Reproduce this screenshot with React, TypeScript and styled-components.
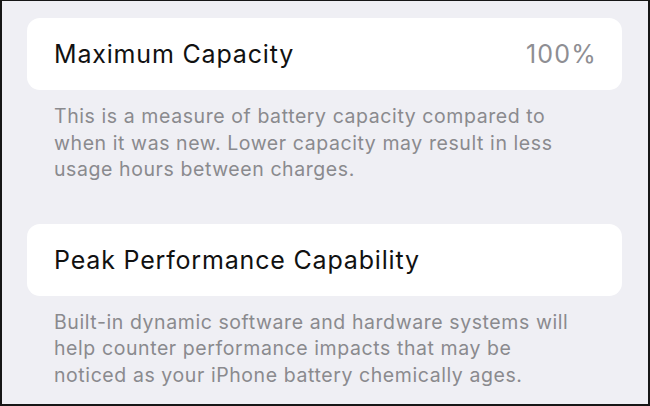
import React from "react";
import styled, { createGlobalStyle } from "styled-components";

const GlobalStyle = createGlobalStyle`
  html, body {
    margin: 0;
    padding: 0;
    background: #efeff4;
  }
  * {
    box-sizing: border-box;
  }
`;

const Screen = styled.div`
  width: 650px;
  height: 406px;
  overflow: hidden;
  background: #efeff4;
  border: 2px solid #161616;
  border-top-width: 1px;
  padding: 17px 26px 0 25px;
  font-family: Inter, "Noto Sans", "Liberation Sans", sans-serif;
  -webkit-font-smoothing: antialiased;
`;

const Group = styled.section<{ $gap?: number }>`
  margin-bottom: ${(props) => props.$gap ?? 0}px;
`;

const Card = styled.div`
  height: 72px;
  border-radius: 13px;
  background: #ffffff;
  display: flex;
  align-items: center;
  justify-content: space-between;
  padding: 0 25px 0 27px;
`;

const Label = styled.span`
  font-size: 25px;
  color: #111111;
  letter-spacing: 0.82px;
`;

const Value = styled.span`
  font-size: 25px;
  color: #8e8e93;
  letter-spacing: 1.2px;
`;

const Footnote = styled.p`
  margin: 0;
  padding: 13px 20px 0 27px;
  font-size: 19.5px;
  line-height: 26.5px;
  letter-spacing: 0.58px;
  color: #8a8a8e;
  white-space: nowrap;
`;

type Row = {
  label: string;
  value?: string;
  lines: string[];
};

const rows: Row[] = [
  {
    label: "Maximum Capacity",
    value: "100%",
    lines: [
      "This is a measure of battery capacity compared to",
      "when it was new. Lower capacity may result in less",
      "usage hours between charges.",
    ],
  },
  {
    label: "Peak Performance Capability",
    lines: [
      "Built-in dynamic software and hardware systems will",
      "help counter performance impacts that may be",
      "noticed as your iPhone battery chemically ages.",
    ],
  },
];

export default function App() {
  return (
    <>
      <GlobalStyle />
      <Screen>
        {rows.map((row, i) => (
          <Group key={row.label} $gap={i === 0 ? 41 : 0}>
            <Card>
              <Label>{row.label}</Label>
              {row.value && <Value>{row.value}</Value>}
            </Card>
            <Footnote>
              {row.lines.map((line, j) => (
                <React.Fragment key={j}>
                  {line}
                  {j < row.lines.length - 1 && <br />}
                </React.Fragment>
              ))}
            </Footnote>
          </Group>
        ))}
      </Screen>
    </>
  );
}
